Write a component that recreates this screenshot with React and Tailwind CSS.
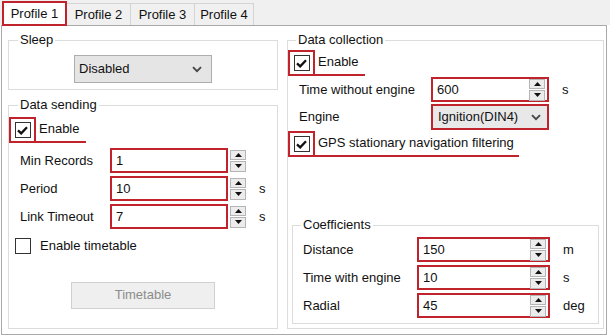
import React from 'react';

const RED = 'border-[#c0232b]';

const Check = ({ checked }) => (
  <span className="flex h-[16px] w-[16px] items-center justify-center border border-[#333333] bg-white">
    {checked && (
      <svg width="11" height="9" viewBox="0 0 11 9">
        <path d="M1 4.3 L4.2 7.4 L10 1.2" fill="none" stroke="#111111" strokeWidth="2.3" />
      </svg>
    )}
  </span>
);

const Spinner = () => (
  <div className="flex h-[22px] w-[16px] flex-col gap-[1px]">
    <div className="flex flex-1 items-center justify-center border border-[#b5b5b5] bg-[#ececec]">
      <svg width="7" height="4" viewBox="0 0 7 4">
        <path d="M0 4 L3.5 0 L7 4Z" fill="#111111" />
      </svg>
    </div>
    <div className="flex flex-1 items-center justify-center border border-[#b5b5b5] bg-[#ececec]">
      <svg width="7" height="4" viewBox="0 0 7 4">
        <path d="M0 0 L3.5 4 L7 0Z" fill="#111111" />
      </svg>
    </div>
  </div>
);

const Chevron = () => (
  <svg width="10" height="7" viewBox="0 0 10 7">
    <path d="M1 1.2 L5 5.2 L9 1.2" fill="none" stroke="#444444" strokeWidth="1.8" />
  </svg>
);

const Group = ({ title, className, titleLeft, children }) => (
  <div className={`relative border border-[#dcdcdc] ${className}`}>
    <span className={`absolute top-[-9px] bg-white px-[2px] leading-[16px] ${titleLeft}`}>{title}</span>
    {children}
  </div>
);

const CheckRow = ({ label, underline, className = '' }) => (
  <div className={`flex items-end ${className}`}>
    <div className={`flex h-[26px] w-[27px] items-center justify-center border-2 ${RED}`}>
      <Check checked />
    </div>
    <span className={`flex h-[26px] items-center border-b-2 ${RED} pl-[3px] ${underline}`}>{label}</span>
  </div>
);

const SpinRow = ({ label, value, unit, className = '' }) => (
  <div className={`flex h-[25px] items-center pl-[11px] ${className}`}>
    <span className="w-[90px]">{label}</span>
    <div className={`flex h-[25px] w-[118px] items-center border-2 ${RED} bg-white pl-[4px]`}>{value}</div>
    <div className="ml-[2px]">
      <Spinner />
    </div>
    {unit && <span className="ml-[13px]">{unit}</span>}
  </div>
);

const InnerSpin = ({ value, width }) => (
  <div className={`flex h-[25px] ${width} items-center justify-between border-2 ${RED} bg-white pl-[4px] pr-[2px]`}>
    <span>{value}</span>
    <Spinner />
  </div>
);

const tabs = ['Profile 1', 'Profile 2', 'Profile 3', 'Profile 4'];

export default function App() {
  return (
    <div className="h-[336px] w-[610px] overflow-hidden bg-white text-[13px] text-[#111111] [font-family:'Liberation_Sans',Arial,sans-serif]">
      <div className="flex h-[25px] items-end bg-[#f0f0f0] pl-[2px]">
        {tabs.map((t, i) =>
          i === 0 ? (
            <div
              key={t}
              className={`z-10 mb-[-1px] flex h-[25px] w-[65px] items-center justify-center border-2 ${RED} bg-white`}
            >
              {t}
            </div>
          ) : (
            <div
              key={t}
              className={`flex h-[22px] ${i === 3 ? 'w-[59px]' : 'w-[64px]'} items-center justify-center border border-b-0 border-l-0 border-[#d4d4d4] bg-[#f0f0f0]`}
            >
              {t}
            </div>
          )
        )}
      </div>
      <div className="ml-[1px] flex h-[310px] w-[606px] gap-[9px] border border-[#a9a9a9] bg-white pl-[6px]">
        <div className="flex w-[270px] flex-col">
          <Group title="Sleep" titleLeft="left-[9px]" className="mt-[14px] h-[50px]">
            <div className="mt-[14px] flex justify-center">
              <div className="flex h-[28px] w-[138px] items-center justify-between border border-[#adadad] bg-[#e5e5e5] pl-[4px] pr-[9px]">
                <span>Disabled</span>
                <Chevron />
              </div>
            </div>
          </Group>
          <Group title="Data sending" titleLeft="left-[9px]" className="mt-[15px] h-[224px]">
            <CheckRow label="Enable" underline="w-[50px]" className="mt-[11px]" />
            <SpinRow label="Min Records" value="1" className="mt-[5px]" />
            <SpinRow label="Period" value="10" unit="s" className="mt-[3px]" />
            <SpinRow label="Link Timeout" value="7" unit="s" className="mt-[3px]" />
            <div className="mt-[7px] flex items-center pl-[6px]">
              <Check />
              <span className="ml-[9px]">Enable timetable</span>
            </div>
            <div className="mt-[26px] flex justify-center">
              <button
                type="button"
                className="h-[27px] w-[144px] border border-[#d0d0d0] bg-[#efefef] text-[13px] text-[#8c8c8c]"
              >
                Timetable
              </button>
            </div>
          </Group>
        </div>
        <div className="flex w-[317px] flex-col">
          <Group title="Data collection" titleLeft="left-[8px]" className="mt-[14px] flex h-[289px] flex-col">
            <CheckRow label="Enable" underline="w-[50px]" className="mt-[9px]" />
            <div className="mt-[1px] flex h-[25px] items-center pl-[11px]">
              <span className="w-[132px]">Time without engine</span>
              <InnerSpin value="600" width="w-[118px]" />
              <span className="ml-[13px]">s</span>
            </div>
            <div className="mt-[2px] flex h-[26px] items-center pl-[11px]">
              <span className="w-[132px]">Engine</span>
              <div className={`flex h-[26px] w-[118px] items-center justify-between border-2 ${RED} bg-[#e8e8e8] pl-[5px] pr-[6px]`}>
                <span>Ignition(DIN4)</span>
                <Chevron />
              </div>
            </div>
            <CheckRow label="GPS stationary navigation filtering" underline="w-[204px]" className="mt-[1px]" />
            <Group title="Coefficients" titleLeft="left-[8px]" className="mx-[4px] mb-[4px] mt-auto h-[99px]">
              <div className="mt-[11px] flex h-[25px] items-center pl-[10px]">
                <span className="w-[114px]">Distance</span>
                <InnerSpin value="150" width="w-[133px]" />
                <span className="ml-[13px]">m</span>
              </div>
              <div className="mt-[3px] flex h-[25px] items-center pl-[10px]">
                <span className="w-[114px]">Time with engine</span>
                <InnerSpin value="10" width="w-[133px]" />
                <span className="ml-[13px]">s</span>
              </div>
              <div className="mt-[3px] flex h-[25px] items-center pl-[10px]">
                <span className="w-[114px]">Radial</span>
                <InnerSpin value="45" width="w-[133px]" />
                <span className="ml-[13px]">deg</span>
              </div>
            </Group>
          </Group>
        </div>
      </div>
    </div>
  );
}
